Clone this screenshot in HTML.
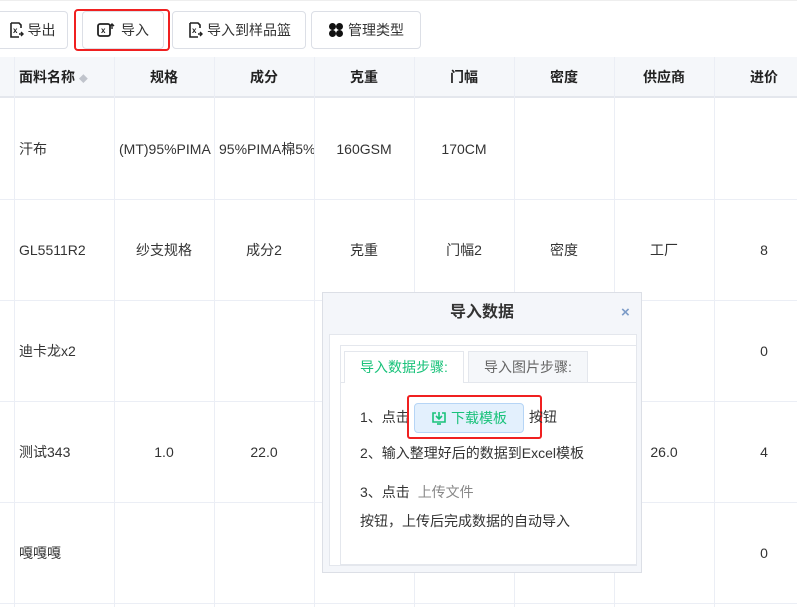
<!DOCTYPE html><html><head><meta charset="utf-8"><style>
*{box-sizing:border-box;margin:0;padding:0}
body{width:797px;height:607px;overflow:hidden;background:#fff;font-family:"Liberation Sans","Noto Sans CJK SC",sans-serif;font-size:14px;color:#333;position:relative;line-height:20px}
.a{position:absolute}
.btn{position:absolute;top:11px;height:38px;border:1px solid #dcdfe6;border-radius:4px;background:#fff;font-size:14px;color:#333;display:flex;align-items:center;justify-content:center;gap:4px}
.hd{position:absolute;top:57px;height:41px;background:#f5f7fa;border-bottom:2px solid #e4e7ed;width:797px;left:0}
.c{position:absolute;width:100px;text-align:center;font-size:14px;line-height:20px;height:20px}
.h{font-weight:bold;color:#222}
.vl{position:absolute;top:57px;width:1px;height:550px;background:#ebeef5}
.hl{position:absolute;left:0;width:797px;height:1px;background:#ebeef5}
</style></head><body>
<div class="a" style="left:0;top:0;width:797px;height:1px;background:#eee"></div>
<div class="btn" style="left:-4px;width:72px;border-left:none"><svg width="16" height="16" viewBox="0 0 16 16"><path d="M3 1h8l2 2v3M3 1v14h8" fill="none" stroke="#222" stroke-width="1.6"/><text x="5" y="11" font-size="8" font-weight="bold" fill="#222">x</text><path d="M11 12h4M13 10l2 2-2 2" stroke="#222" fill="none" stroke-width="1.4"/></svg>导出</div>
<div class="btn" style="left:82px;width:82px"><svg width="20" height="16" viewBox="0 0 20 16"><rect x="1" y="2" width="12" height="12" rx="2" fill="none" stroke="#222" stroke-width="1.8"/><text x="4" y="11" font-size="8" font-weight="bold" fill="#222">x</text><path d="M13 4l2-2 2 2M15 2v5" stroke="#222" fill="none" stroke-width="1.4"/></svg>导入</div>
<div class="a" style="left:74px;top:9px;width:96px;height:42px;border:2px solid #f02020;border-radius:4px"></div>
<div class="btn" style="left:172px;width:134px"><svg width="16" height="16" viewBox="0 0 16 16"><path d="M3 1h8l2 2v3M3 1v14h8" fill="none" stroke="#222" stroke-width="1.6"/><text x="5" y="11" font-size="8" font-weight="bold" fill="#222">x</text><path d="M11 12h4M13 10l2 2-2 2" stroke="#222" fill="none" stroke-width="1.4"/></svg>导入到样品篮</div>
<div class="btn" style="left:311px;width:110px"><svg width="16" height="16" viewBox="0 0 16 16"><circle cx="4.5" cy="4.5" r="3.5" fill="#111"/><circle cx="11.5" cy="4.5" r="3.5" fill="#111"/><circle cx="4.5" cy="11.5" r="3.5" fill="#111"/><circle cx="11.5" cy="11.5" r="3.5" fill="#111"/></svg>管理类型</div>
<div class="hd"></div>
<div class="vl" style="left:14px"></div><div class="vl" style="left:114px"></div><div class="vl" style="left:214px"></div><div class="vl" style="left:314px"></div><div class="vl" style="left:414px"></div><div class="vl" style="left:514px"></div><div class="vl" style="left:614px"></div><div class="vl" style="left:714px"></div>
<div class="hl" style="top:199px"></div><div class="hl" style="top:300px"></div><div class="hl" style="top:401px"></div><div class="hl" style="top:502px"></div><div class="hl" style="top:603px"></div>
<div class="c h" style="left:19px;top:67px;text-align:left">面料名称 <span style="color:#c0c4cc;font-size:9px">◆</span></div>
<div class="c h" style="left:114px;top:67px">规格</div><div class="c h" style="left:214px;top:67px">成分</div><div class="c h" style="left:314px;top:67px">克重</div><div class="c h" style="left:414px;top:67px">门幅</div><div class="c h" style="left:514px;top:67px">密度</div><div class="c h" style="left:614px;top:67px">供应商</div><div class="c h" style="left:714px;top:67px;text-align:left;padding-left:36px">进价</div>
<div class="c" style="left:19px;top:139px;text-align:left">汗布</div>
<div class="c" style="left:119px;top:139px;width:95px;overflow:hidden;white-space:nowrap;text-align:left">(MT)95%PIMA</div>
<div class="c" style="left:219px;top:139px;width:95px;overflow:hidden;white-space:nowrap;text-align:left">95%PIMA棉5%</div>
<div class="c" style="left:314px;top:139px">160GSM</div><div class="c" style="left:414px;top:139px">170CM</div>
<div class="c" style="left:19px;top:240px;text-align:left">GL5511R2</div>
<div class="c" style="left:114px;top:240px">纱支规格</div><div class="c" style="left:214px;top:240px">成分2</div><div class="c" style="left:314px;top:240px">克重</div><div class="c" style="left:414px;top:240px">门幅2</div><div class="c" style="left:514px;top:240px">密度</div><div class="c" style="left:614px;top:240px">工厂</div><div class="c" style="left:714px;top:240px">8</div>
<div class="c" style="left:19px;top:341px;text-align:left">迪卡龙x2</div><div class="c" style="left:714px;top:341px">0</div>
<div class="c" style="left:19px;top:442px;text-align:left">测试343</div><div class="c" style="left:114px;top:442px">1.0</div><div class="c" style="left:214px;top:442px">22.0</div><div class="c" style="left:614px;top:442px">26.0</div><div class="c" style="left:714px;top:442px">4</div>
<div class="c" style="left:19px;top:543px;text-align:left">嘎嘎嘎</div><div class="c" style="left:714px;top:543px">0</div>
<!-- dialog -->
<div class="a" style="left:322px;top:292px;width:320px;height:281px;background:#f4f6fa;border:1px solid #dcdfe6"></div>
<div class="a" style="left:322px;top:301px;width:320px;text-align:center;font-size:16px;font-weight:bold;color:#333;line-height:24px">导入数据</div>
<div class="a" style="left:621px;top:303px;color:#7d9cc8;font-size:15px;font-weight:bold">×</div>
<div class="a" style="left:329px;top:334px;width:308px;height:232px;background:#fff;border:1px solid #e4e7ed"></div>
<div class="a" style="left:340px;top:345px;width:297px;height:220px;border:1px solid #e4e7ed;border-right:none"></div>
<div class="a" style="left:340px;top:382px;width:297px;height:1px;background:#e4e7ed"></div>
<div class="a" style="left:344px;top:351px;width:120px;height:32px;background:#fff;border:1px solid #e4e7ed;border-bottom:none;color:#19c27a;font-size:14px;text-align:center;line-height:30px">导入数据步骤:</div>
<div class="a" style="left:468px;top:351px;width:120px;height:31px;background:#f5f7fa;border:1px solid #e4e7ed;border-bottom:none;color:#666;font-size:14px;text-align:center;line-height:30px">导入图片步骤:</div>
<div class="a" style="left:360px;top:407px;font-size:14px;color:#333">1、点击</div>
<div class="a" style="left:414px;top:403px;width:110px;height:30px;background:#e3f0fd;border:1px solid #b6d5f6;border-radius:4px;color:#19c27a;font-size:14px;display:flex;align-items:center;justify-content:center;gap:4px"><svg width="16" height="16" viewBox="0 0 16 16"><path d="M5 3H2v9h12V3h-3" fill="none" stroke="#19c27a" stroke-width="1.6"/><path d="M8 2v7M5 6l3 3 3-3" fill="none" stroke="#19c27a" stroke-width="1.6"/><path d="M6 14h4" stroke="#19c27a" stroke-width="1.6"/></svg>下载模板</div>
<div class="a" style="left:407px;top:395px;width:135px;height:44px;border:2px solid #f02020;border-radius:3px"></div>
<div class="a" style="left:529px;top:407px;font-size:14px;color:#333">按钮</div>
<div class="a" style="left:360px;top:443px;font-size:14px;color:#333">2、输入整理好后的数据到Excel模板</div>
<div class="a" style="left:360px;top:482px;font-size:14px;color:#333">3、点击 <span style="color:#888;margin-left:4px">上传文件</span></div>
<div class="a" style="left:360px;top:511px;font-size:14px;color:#333">按钮，上传后完成数据的自动导入</div>
</body></html>
